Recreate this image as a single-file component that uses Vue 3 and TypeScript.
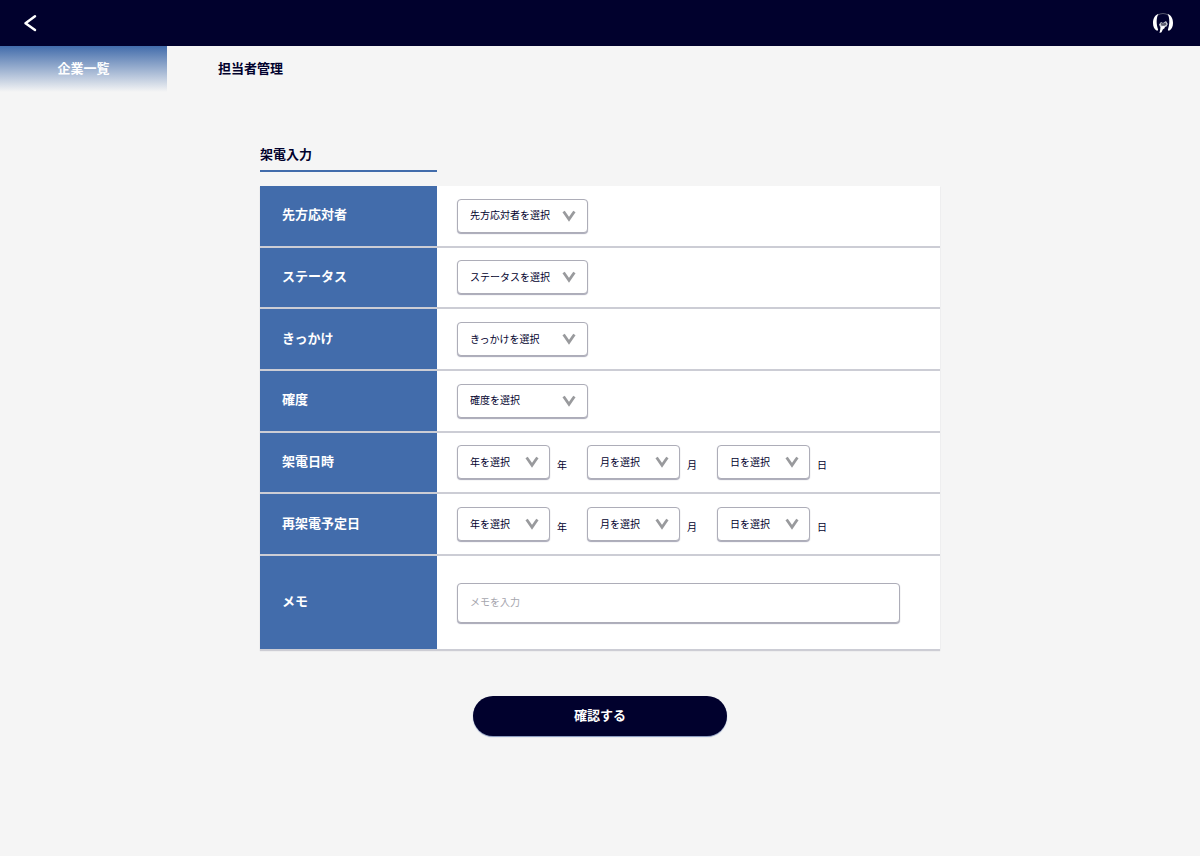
<script setup lang="ts">
import { ref } from 'vue'

interface SelectField {
  id: string
  placeholder: string
  options: string[]
  unit?: string
}

interface FormRow {
  label: string
  fields: SelectField[]
}

const numbers = (from: number, to: number): string[] =>
  Array.from({ length: to - from + 1 }, (_, i) => String(from + i))

const dateFields = (prefix: string): SelectField[] => [
  { id: `${prefix}-year`, placeholder: '年を選択', options: numbers(2020, 2030), unit: '年' },
  { id: `${prefix}-month`, placeholder: '月を選択', options: numbers(1, 12), unit: '月' },
  { id: `${prefix}-day`, placeholder: '日を選択', options: numbers(1, 31), unit: '日' },
]

const rows: FormRow[] = [
  { label: '先方応対者', fields: [{ id: 'contact', placeholder: '先方応対者を選択', options: [] }] },
  { label: 'ステータス', fields: [{ id: 'status', placeholder: 'ステータスを選択', options: [] }] },
  { label: 'きっかけ', fields: [{ id: 'trigger', placeholder: 'きっかけを選択', options: [] }] },
  { label: '確度', fields: [{ id: 'accuracy', placeholder: '確度を選択', options: [] }] },
  { label: '架電日時', fields: dateFields('call') },
  { label: '再架電予定日', fields: dateFields('recall') },
]

const values = ref<Record<string, string>>(
  Object.fromEntries(rows.flatMap((row) => row.fields.map((field) => [field.id, '']))),
)
const memo = ref('')
</script>

<template>
  <div class="page">
    <header class="topbar">
      <button class="icon-button" type="button" aria-label="戻る">
        <svg class="back" viewBox="0 0 14 18" aria-hidden="true">
          <path d="M12 2.200 2.500 9.200l9.500 6.800" fill="none" stroke="#fff" stroke-width="2.500" stroke-linecap="round" stroke-linejoin="round" />
        </svg>
      </button>
      <button class="icon-button" type="button" aria-label="アカウント">
        <svg class="account" viewBox="0 0 22 22" aria-hidden="true">
          <path d="M5 3.500Q11-.500 17 3.500" fill="none" stroke="#55586d" stroke-width="1" />
          <path d="M6.500 1.800C2.500 3.500 1 7 1 11c0 3.500 1.200 6.300 3.500 7.500 1 .4 1.900-.2 1.500-1.200C4.500 13 3.800 6.500 6.500 1.800Z" fill="#fff" />
          <path d="M15.500 1.800C19.500 3.500 21 7 21 11c0 3.500-1.200 6.300-3.500 7.500-1 .4-1.900-.2-1.500-1.200C17.500 13 18.200 6.500 15.500 1.800Z" fill="#fff" />
          <path d="M7 12.500 9 10l2 1 3-2 1.800 3-1.300 2.500-3.500 1.200-3-1Z" fill="#c9cad3" />
          <path d="M8.500 10.500 11 11.500l2.500-1 1 2-2 1.300H9.500Z" fill="#5a5c6e" />
          <path d="m8.500 14.500 4-.6.3 2-2 1.600-1.300 2.800-2 .8.700-3.300Z" fill="#fff" />
        </svg>
      </button>
    </header>

    <nav class="tabs">
      <a class="tab active" href="#companies">企業一覧</a>
      <a class="tab" href="#staff">担当者管理</a>
    </nav>

    <main>
      <form class="call-form" @submit.prevent>
        <h1 class="title">架電入力</h1>
        <table class="sheet">
          <tbody>
            <tr v-for="row in rows" :key="row.label">
              <th scope="row">
                <label :for="row.fields[0].id">{{ row.label }}</label>
              </th>
              <td>
                <div class="fields">
                  <div v-for="field in row.fields" :key="field.id" class="field" :class="{ dated: field.unit }">
                    <span class="picker">
                      <select :id="field.id" v-model="values[field.id]" :aria-label="field.unit ? `${row.label} ${field.unit}` : undefined">
                        <option value="">{{ field.placeholder }}</option>
                        <option v-for="option in field.options" :key="option" :value="option">{{ option }}</option>
                      </select>
                      <svg class="chevron" viewBox="0 0 14 12" aria-hidden="true">
                        <path d="M1.600 1.500 7 9.200l5.400-7.700" fill="none" stroke="#999a9d" stroke-width="2.800" />
                      </svg>
                    </span>
                    <label v-if="field.unit" class="unit" :for="field.id">{{ field.unit }}</label>
                  </div>
                </div>
              </td>
            </tr>
            <tr class="memo-row">
              <th scope="row"><label for="memo">メモ</label></th>
              <td><input id="memo" v-model="memo" class="memo" type="text" placeholder="メモを入力" /></td>
            </tr>
          </tbody>
        </table>
        <button class="submit" type="submit">確認する</button>
      </form>
    </main>
  </div>
</template>

<style>
body {
  margin: 0;
  background: #f5f5f5;
}
</style>

<style scoped>
.page {
  min-height: 100vh;
  background: #f5f5f5;
  color: #01012d;
  font-family: 'Noto Sans CJK JP', 'Liberation Sans', sans-serif;
  font-size: 13px;
  line-height: 20px;
}

.page * {
  box-sizing: border-box;
}

button,
select,
input {
  font-family: inherit;
  color: inherit;
}

.topbar {
  display: flex;
  align-items: center;
  justify-content: space-between;
  height: 46px;
  padding: 0 22px;
  background: #01012d;
}

.icon-button {
  display: flex;
  padding: 0 4px;
  border: 0;
  background: none;
  cursor: pointer;
}

.icon-button:first-child {
  padding: 0 1px;
}

.back {
  width: 14px;
  height: 18px;
}

.account {
  width: 22px;
  height: 22px;
}

.tabs {
  display: flex;
}

.tab {
  width: 167px;
  padding: 12px 0 14px;
  color: #01012d;
  font-weight: 700;
  text-align: center;
  text-decoration: none;
}

.tab.active {
  background: linear-gradient(#426cab, #f5f5f5);
  color: #fff;
}

.call-form {
  max-width: 680px;
  margin: 0 auto;
  padding: 52px 0 48px;
}

.title {
  width: 177px;
  margin: 0 0 14px;
  padding-bottom: 6px;
  border-bottom: 2px solid #426cab;
  font-size: 13px;
  line-height: 20px;
}

.sheet {
  width: 100%;
  height: 464px;
  border-spacing: 0;
  table-layout: fixed;
  background: #fff;
  box-shadow: 0 1px 1px rgba(1, 1, 45, 0.16);
}

th,
td {
  padding: 0;
  border-bottom: 2px solid #cccdd5;
  vertical-align: middle;
}

tr:last-child th,
tr:last-child td {
  border-bottom-width: 1px;
}

th {
  width: 177px;
  padding: 0 22px 3px;
  background: #426cab;
  background-clip: padding-box;
  color: #fff;
  font-weight: 700;
  text-align: left;
}

td {
  padding: 0 40px 0 20px;
}

.memo-row {
  height: 94px;
}

.fields {
  display: flex;
}

.field {
  display: flex;
  align-items: center;
  gap: 7px;
}

.field.dated {
  width: 130px;
}

.picker {
  display: flex;
  position: relative;
  width: 131px;
}

.dated .picker {
  width: 93px;
}

select,
.memo {
  width: 100%;
  margin: 0;
  border: 1px solid #adadb8;
  border-radius: 4px;
  background: #fff;
  box-shadow: 0 1px 1px rgba(1, 1, 45, 0.35);
  font-size: 10px;
}

select {
  appearance: none;
  height: 34px;
  padding: 0 30px 2px 12px;
}

.dated select {
  padding-right: 26px;
}

.chevron {
  position: absolute;
  top: 11px;
  right: 12px;
  width: 14px;
  height: 12px;
  pointer-events: none;
}

.dated .chevron {
  right: 11px;
}

.unit {
  padding-top: 5px;
  font-size: 10px;
}

.memo {
  display: block;
  height: 40px;
  padding: 0 12px 2px;
}

.memo::placeholder {
  color: #a5a5ad;
  opacity: 1;
}

.submit {
  display: block;
  width: 254px;
  height: 40px;
  margin: 46px auto 0;
  padding: 0 0 4px;
  border: 0;
  border-radius: 20px;
  background: #01012d;
  box-shadow: 0 1px 1px #8293b8;
  color: #fff;
  font-size: 13px;
  font-weight: 700;
  cursor: pointer;
}
</style>
